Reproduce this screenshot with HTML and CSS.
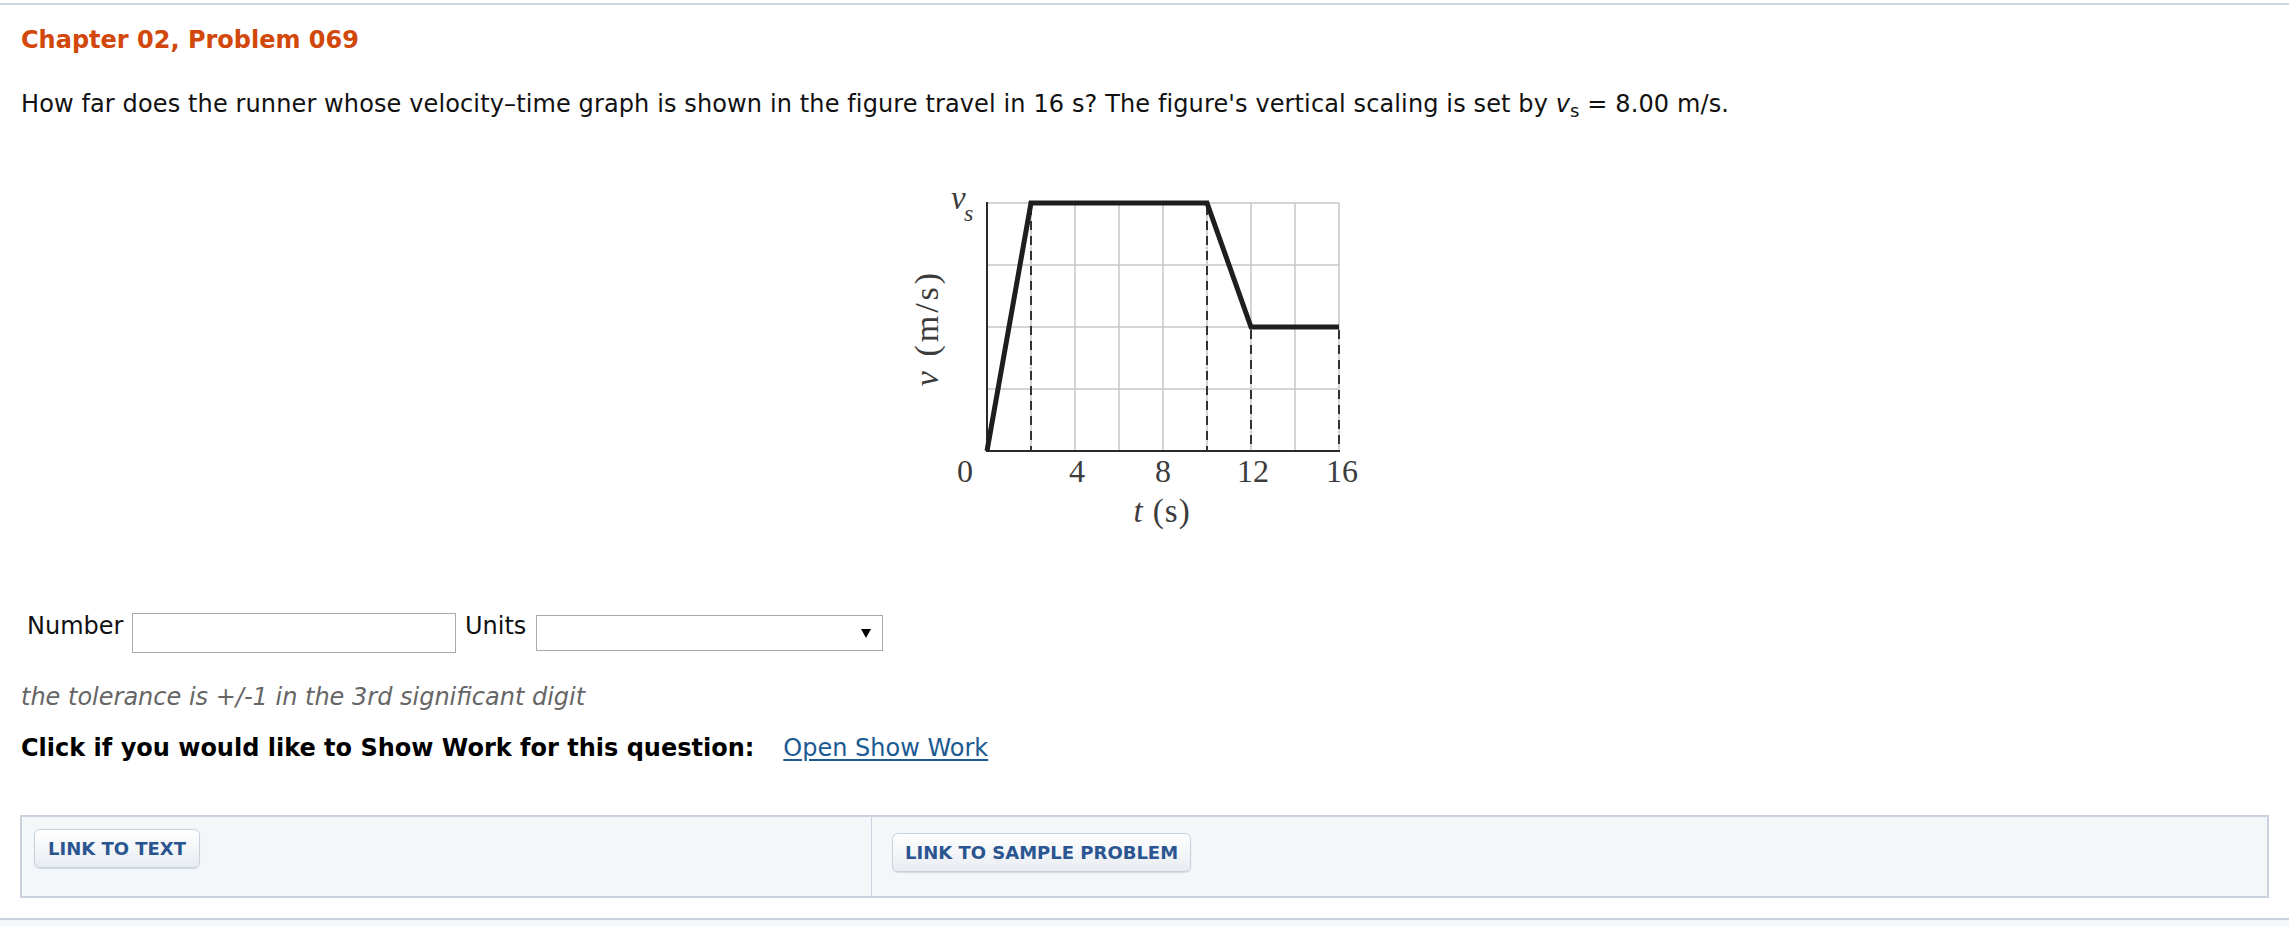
FILE: index.html
```html
<!DOCTYPE html>
<html lang="en">
<head>
<meta charset="utf-8">
<title>Chapter 02, Problem 069</title>
<link rel="stylesheet" href="styles.css">
</head>
<body>
<div class="topline"></div>
<main class="content">
  <h1 class="title">Chapter 02, Problem 069</h1>
  <p class="question">How far does the runner whose velocity–time graph is shown in the figure travel in 16 s? The figure's vertical scaling is set by <i>v</i><sub class="sub">s</sub> = 8.00 m/s.</p>

  <div class="figure">
    <svg class="graph" width="489" height="360" viewBox="900 180 489 360" xmlns="http://www.w3.org/2000/svg">
      <g stroke="#c6c6c6" stroke-width="1.5" fill="none">
        <line x1="1031" y1="203" x2="1031" y2="451"/>
        <line x1="1075" y1="203" x2="1075" y2="451"/>
        <line x1="1119" y1="203" x2="1119" y2="451"/>
        <line x1="1163" y1="203" x2="1163" y2="451"/>
        <line x1="1207" y1="203" x2="1207" y2="451"/>
        <line x1="1251" y1="203" x2="1251" y2="451"/>
        <line x1="1295" y1="203" x2="1295" y2="451"/>
        <line x1="1339" y1="203" x2="1339" y2="451"/>
        <line x1="987" y1="203" x2="1339" y2="203"/>
        <line x1="987" y1="265" x2="1339" y2="265"/>
        <line x1="987" y1="327" x2="1339" y2="327"/>
        <line x1="987" y1="389" x2="1339" y2="389"/>
      </g>
      <g stroke="#2a2a2a" stroke-width="2" fill="none">
        <line x1="987" y1="202" x2="987" y2="452"/>
        <line x1="986" y1="451" x2="1340" y2="451"/>
      </g>
      <g stroke="#333" stroke-width="2" stroke-dasharray="9 6" fill="none">
        <line x1="1031" y1="206" x2="1031" y2="451"/>
        <line x1="1207" y1="206" x2="1207" y2="451"/>
        <line x1="1251" y1="330" x2="1251" y2="451"/>
        <line x1="1339" y1="330" x2="1339" y2="451"/>
      </g>
      <polyline points="987,451 1031,203 1207,203 1251,327 1339,327" fill="none" stroke="#1e1e1e" stroke-width="5" stroke-linejoin="miter"/>
      <g class="fig-text" fill="#3c3c3c" font-family="'Liberation Serif', 'DejaVu Serif', serif" font-size="32">
        <text x="951" y="209" font-style="italic" font-size="33">v</text>
        <text x="964" y="221" font-style="italic" font-size="24">s</text>
        <text x="965" y="482" text-anchor="middle">0</text>
        <text x="1077" y="482" text-anchor="middle">4</text>
        <text x="1163" y="482" text-anchor="middle">8</text>
        <text x="1253" y="482" text-anchor="middle">12</text>
        <text x="1342" y="482" text-anchor="middle">16</text>
        <text x="1162" y="522" text-anchor="middle" font-size="33" letter-spacing="1"><tspan font-style="italic">t</tspan> (s)</text>
        <text x="938" y="328" text-anchor="middle" font-size="34" letter-spacing="3" transform="rotate(-90 938 328)"><tspan font-style="italic">v</tspan> (m/s)</text>
      </g>
    </svg>
  </div>

  <div class="answer-row">
    <span class="lbl lbl-number">Number</span>
    <span class="field field-input"></span>
    <span class="lbl lbl-units">Units</span>
    <span class="field field-select"><span class="arrow"></span></span>
  </div>

  <p class="tolerance">the tolerance is +/-1 in the 3rd significant digit</p>

  <p class="showwork"><b class="showwork-label">Click if you would like to Show Work for this question:</b><a class="showwork-link" href="#">Open Show Work</a></p>

  <div class="links">
    <div class="cell cell-left"><span class="btn">LINK TO TEXT</span></div>
    <div class="cell cell-right"><span class="btn btn-sample">LINK TO SAMPLE PROBLEM</span></div>
  </div>
</main>
<div class="next-section"></div>
</body>
</html>
```

FILE: styles.css
```css
html, body {
  margin: 0;
  padding: 0;
  background: #ffffff;
}

body {
  font-family: "DejaVu Sans", Verdana, sans-serif;
  color: #111;
}

.topline {
  margin-top: 3px;
  height: 2px;
  background: #ccd5e0;
}

.content {
  padding: 0 20px;
}

.title {
  margin: 21px 0 0 1px;
  font-size: 24px;
  line-height: 28px;
  font-weight: bold;
  color: #d2470a;
}

.question {
  margin: 36px 0 0 1px;
  font-size: 24px;
  line-height: 28px;
  letter-spacing: 0.12px;
  color: #111;
}

.question i {
  font-style: italic;
}

.sub {
  font-size: 18px;
  line-height: 0;
  vertical-align: -5px;
}

.figure {
  margin-top: 62px;
  display: flex;
  justify-content: center;
}

.graph {
  display: block;
}

.answer-row {
  margin-top: 72px;
  display: flex;
  align-items: flex-start;
}

.lbl {
  font-size: 24px;
  line-height: 28px;
  color: #111;
  box-sizing: border-box;
}

.lbl-number {
  width: 112px;
  padding-left: 7px;
}

.lbl-units {
  width: 80px;
  padding-left: 9px;
}

.field {
  box-sizing: border-box;
  border: 1px solid #a9a9a9;
  background: #fff;
  display: flex;
  align-items: center;
  justify-content: flex-end;
}

.field-input {
  width: 324px;
  height: 40px;
  margin-top: 1px;
}

.field-select {
  width: 347px;
  height: 36px;
  margin-top: 3px;
  padding-right: 11px;
}

.arrow {
  width: 0;
  height: 0;
  border-left: 5px solid transparent;
  border-right: 5px solid transparent;
  border-top: 9px solid #000;
}

.tolerance {
  margin: 30px 0 0 1px;
  font-size: 24px;
  line-height: 28px;
  font-style: italic;
  color: #666;
}

.showwork {
  margin: 23px 0 0 1px;
  font-size: 24px;
  line-height: 28px;
  display: flex;
}

.showwork-label {
  font-weight: bold;
  color: #000;
}

.showwork-link {
  margin-left: 29px;
  color: #1b5a92;
  text-decoration: underline;
  text-underline-offset: 3px;
}

.links {
  margin-top: 53px;
  height: 83px;
  box-sizing: border-box;
  border: 2px solid #c9d2de;
  background: #f4f7fa;
  display: grid;
  grid-template-columns: 850px 1fr;
}

.cell-left {
  border-right: 1px solid #c9d2de;
  padding: 12px 0 0 12px;
}

.cell-right {
  padding: 16px 0 0 20px;
}

.btn {
  display: inline-flex;
  align-items: center;
  box-sizing: border-box;
  height: 39px;
  padding: 0 13px;
  border: 1px solid #c8d2dd;
  border-radius: 6px;
  background: linear-gradient(#ffffff, #e8ecf1);
  box-shadow: 0 1px 1px rgba(160, 175, 195, 0.4);
  font-size: 18px;
  font-weight: bold;
  color: #2a5590;
  white-space: nowrap;
}

.btn-sample {
  padding: 0 12px;
}

.next-section {
  margin-top: 20px;
  border-top: 2px solid #c9d2de;
  background: #f4f7fa;
  height: 40px;
}
```
